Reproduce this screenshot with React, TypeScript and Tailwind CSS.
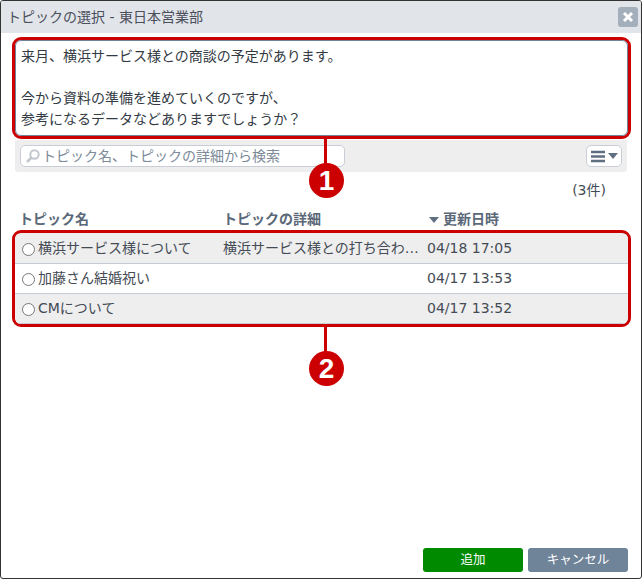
import type { JSX } from 'react'

const FONT = "font-['DejaVu_Sans','Noto_Sans_CJK_JP',sans-serif]"

const ROWS = [
  { name: '横浜サービス様について', detail: '横浜サービス様との打ち合わ…', date: '04/18 17:05', shaded: true },
  { name: '加藤さん結婚祝い', detail: '', date: '04/17 13:53', shaded: false },
  { name: 'CMについて', detail: '', date: '04/17 13:52', shaded: true },
]

// Numbered red marker hanging off an annotated frame.
const Callout = ({ n, topClass }: { n: string; topClass: string }): JSX.Element => (
  <div className={`absolute left-[308px] flex w-[35px] flex-col items-center ${topClass}`}>
    <span className="-ml-[2px] h-[27px] w-[3px] bg-[#cc0000]" />
    <span className="-mt-[1px] grid h-[35px] w-[35px] place-items-center rounded-full bg-[#cc0000] font-['Liberation_Sans',sans-serif] text-[28px] leading-none font-bold text-white">
      {n}
    </span>
  </div>
)

const App = (): JSX.Element => (
  <div className={`relative flex h-[579px] w-[642px] flex-col overflow-hidden rounded-[3px] border border-[#333333] bg-white text-[14px] text-[#444b55] ${FONT}`}>
    {/* title bar */}
    <div className="flex h-[32px] shrink-0 items-center justify-between bg-[#e1e4e9] pr-[3px] pl-[6px]">
      <span className="text-[14px] text-[#4a4f5c]">トピックの選択 - 東日本営業部</span>
      <button className="grid h-[20px] w-[20px] place-items-center rounded-[3px] bg-[#a3afbb]">
        <svg width="12" height="12" viewBox="0 0 12 12">
          <path d="M2 2l8 8M10 2l-8 8" stroke="#fff" strokeWidth="3" />
        </svg>
      </button>
    </div>

    {/* message */}
    <div className="mt-[4px] ml-[11px] h-[102px] w-[619px] shrink-0 rounded-[9px] border-[3px] border-[#cc0000]">
      <div className="h-full rounded-[6px] border border-[#6f8499] bg-white pt-[5px] pl-[5px] text-[14px] leading-[21px] text-[#333a44]">
        <p>来月、横浜サービス様との商談の予定があります。</p>
        <p className="mt-[21px]">今から資料の準備を進めていくのですが、</p>
        <p>参考になるデータなどありますでしょうか？</p>
      </div>
    </div>

    {/* search toolbar */}
    <div className="mt-[1px] ml-[14px] flex h-[32px] w-[612px] shrink-0 items-center justify-between rounded-b-[3px] bg-[#eeeeee] pr-[5px] pl-[5px]">
      <div className="flex h-[22px] w-[325px] items-center gap-[1px] rounded-[5px] border border-[#c9ced6] bg-white pl-[4px] text-[14px] text-[#7c8a99]">
        <svg width="16" height="16" viewBox="0 0 16 16" className="shrink-0">
          <circle cx="9.5" cy="6.5" r="4.2" fill="none" stroke="#c2c7cd" strokeWidth="2" />
          <path d="M6.5 9.5L2 14" stroke="#c2c7cd" strokeWidth="2.6" />
        </svg>
        <span>トピック名、トピックの詳細から検索</span>
      </div>
      <button className="flex h-[22px] w-[36px] items-center justify-center gap-[2px] rounded-[5px] border border-[#c9ced6] bg-white">
        <svg width="15" height="13" viewBox="0 0 15 13">
          <path d="M0 2h14M0 6.5h14M0 11h14" stroke="#5f6f82" strokeWidth="2.4" />
        </svg>
        <svg width="10" height="6" viewBox="0 0 10 6">
          <path d="M0 0h10L5 6z" fill="#5f6f82" />
        </svg>
      </button>
    </div>

    <div className="mt-[8px] h-[20px] shrink-0 pr-[35px] text-right text-[14px] leading-[20px] text-[#444b55]">(3件)</div>

    {/* column headers */}
    <div className="mt-[9px] flex h-[21px] shrink-0 pl-[18px] text-[14px] leading-[21px] font-bold text-[#5a6878]">
      <span className="w-[204px]">トピック名</span>
      <span className="w-[206px]">トピックの詳細</span>
      <span className="flex items-center gap-[4px]">
        <svg width="10" height="6" viewBox="0 0 10 6">
          <path d="M0 0h10L5 6z" fill="#5f6f82" />
        </svg>
        更新日時
      </span>
    </div>

    {/* topic rows */}
    <div className="ml-[11px] w-[619px] shrink-0 overflow-hidden rounded-[9px] border-[3px] border-[#cc0000] bg-[#eeeeee] pt-[1px]">
      {ROWS.map((row) => (
        <div
          key={row.date}
          className={`flex h-[30px] items-center border-b border-[#c5ccd6] pl-[7px] text-[14px] text-[#444b55] ${row.shaded ? 'bg-[#eeeeee]' : 'bg-white'}`}
        >
          <span className="mt-[1px] h-[13px] w-[13px] shrink-0 rounded-full border border-[#777777] bg-white" />
          <span className="ml-[3px] w-[185px]">{row.name}</span>
          <span className="w-[204px]">{row.detail}</span>
          <span>{row.date}</span>
        </div>
      ))}
    </div>

    {/* footer buttons */}
    <div className="mt-auto mb-[6px] flex justify-end gap-[5px] pr-[13px]">
      <button className="h-[24px] w-[100px] rounded-[3px] bg-[#008a00] text-[12.5px] text-white">追加</button>
      <button className="h-[24px] w-[100px] rounded-[3px] bg-[#6f8499] text-[12.5px] text-white">キャンセル</button>
    </div>

    <Callout n="1" topClass="top-[136px]" />
    <Callout n="2" topClass="top-[324px]" />
  </div>
)

export default App
